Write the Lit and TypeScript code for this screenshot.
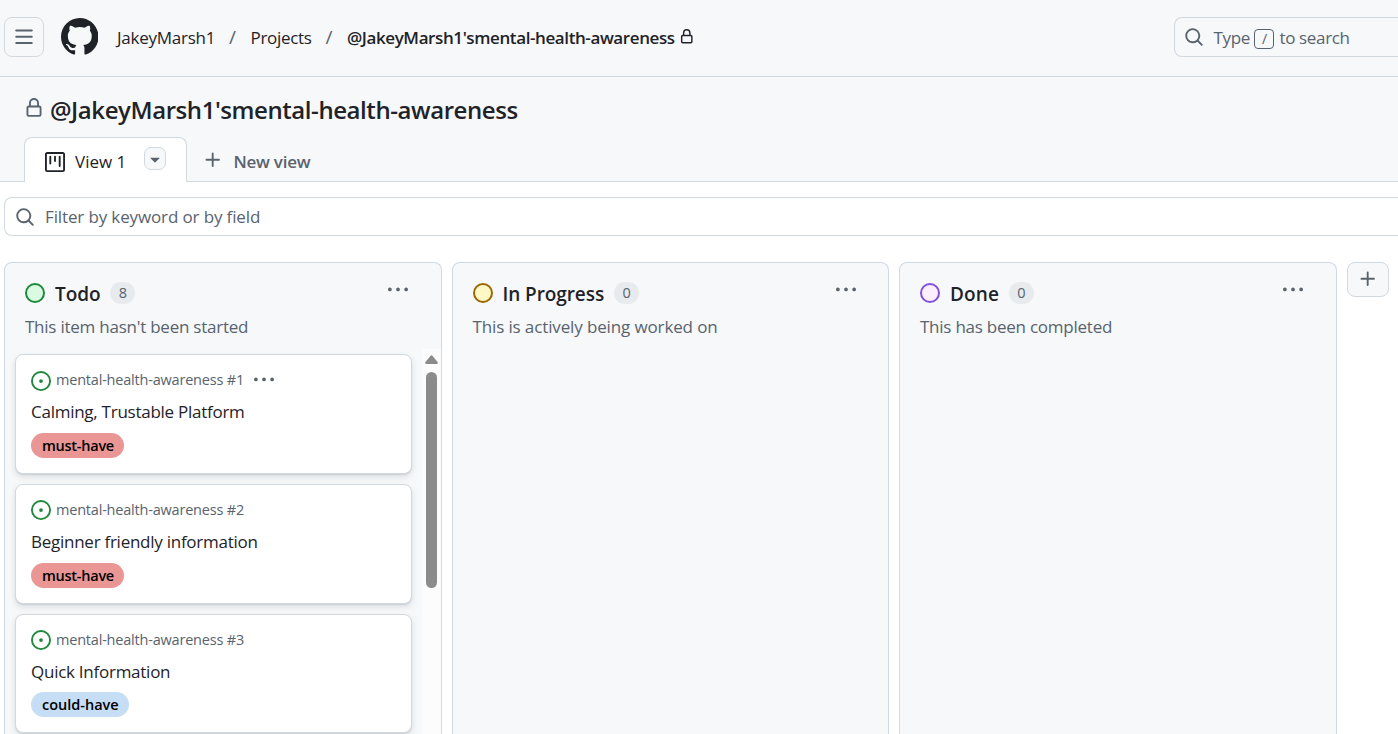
import { LitElement, html, css, svg } from "lit";
import { customElement, property } from "lit/decorators.js";

const ICONS: Record<string, string> = {
  menu: "M1 2.75A.75.75 0 0 1 1.75 2h12.5a.75.75 0 0 1 0 1.5H1.75A.75.75 0 0 1 1 2.75Zm0 5A.75.75 0 0 1 1.75 7h12.5a.75.75 0 0 1 0 1.5H1.75A.75.75 0 0 1 1 7.75ZM1.75 12h12.5a.75.75 0 0 1 0 1.5H1.75a.75.75 0 0 1 0-1.5Z",
  mark: "M8 0c4.42 0 8 3.58 8 8a8.013 8.013 0 0 1-5.45 7.59c-.4.08-.55-.17-.55-.38 0-.27.01-1.13.01-2.2 0-.75-.25-1.23-.54-1.48 1.78-.2 3.65-.88 3.65-3.95 0-.88-.31-1.59-.82-2.15.08-.2.36-1.02-.08-2.12 0 0-.67-.22-2.2.82-.64-.18-1.32-.27-2-.27-.68 0-1.36.09-2 .27-1.53-1.03-2.2-.82-2.2-.82-.44 1.1-.16 1.92-.08 2.12-.51.56-.82 1.28-.82 2.15 0 3.06 1.86 3.75 3.64 3.95-.23.2-.44.55-.51 1.07-.46.21-1.61.55-2.33-.66-.15-.24-.6-.83-1.23-.82-.67.01-.27.38.01.53.34.19.73.9.82 1.13.16.45.68 1.31 2.69.94 0 .67.01 1.3.01 1.49 0 .21-.15.45-.55.38A7.995 7.995 0 0 1 0 8c0-4.42 3.58-8 8-8Z",
  lock: "M4 4a4 4 0 0 1 8 0v2h.25c.966 0 1.75.784 1.75 1.75v5.5A1.75 1.75 0 0 1 12.25 15h-8.5A1.75 1.75 0 0 1 2 13.25v-5.5C2 6.784 2.784 6 3.75 6H4Zm8.25 3.5h-8.5a.25.25 0 0 0-.25.25v5.5c0 .138.112.25.25.25h8.5a.25.25 0 0 0 .25-.25v-5.5a.25.25 0 0 0-.25-.25ZM10.5 6V4a2.5 2.5 0 1 0-5 0v2Z",
  search: "M10.68 11.74a6 6 0 0 1-7.922-8.982 6 6 0 0 1 8.982 7.922l3.04 3.04a.749.749 0 0 1-.326 1.275.749.749 0 0 1-.734-.215ZM11.5 7a4.499 4.499 0 1 0-8.997 0A4.499 4.499 0 0 0 11.5 7Z",
  project: "M1.75 0h12.5C15.216 0 16 .784 16 1.75v12.5A1.75 1.75 0 0 1 14.25 16H1.75A1.75 1.75 0 0 1 0 14.25V1.75C0 .784.784 0 1.75 0ZM1.5 1.75v12.5c0 .138.112.25.25.25h12.5a.25.25 0 0 0 .25-.25V1.75a.25.25 0 0 0-.25-.25H1.75a.25.25 0 0 0-.25.25ZM11.75 3a.75.75 0 0 1 .75.75v7.5a.75.75 0 0 1-1.5 0v-7.5a.75.75 0 0 1 .75-.75Zm-8.25.75a.75.75 0 0 1 1.5 0v5.5a.75.75 0 0 1-1.5 0ZM8 3a.75.75 0 0 1 .75.75v3.5a.75.75 0 0 1-1.5 0v-3.5A.75.75 0 0 1 8 3Z",
  caret: "m4.427 7.427 3.396 3.396a.25.25 0 0 0 .354 0l3.396-3.396A.25.25 0 0 0 11.396 7H4.604a.25.25 0 0 0-.177.427Z",
  plus: "M7.75 2a.75.75 0 0 1 .75.75V7h4.25a.75.75 0 0 1 0 1.5H8.5v4.25a.75.75 0 0 1-1.5 0V8.5H2.75a.75.75 0 0 1 0-1.5H7V2.75A.75.75 0 0 1 7.75 2Z",
  dots: "M8 9a1.5 1.5 0 1 0 0-3 1.5 1.5 0 0 0 0 3ZM1.5 9a1.5 1.5 0 1 0 0-3 1.5 1.5 0 0 0 0 3Zm13 0a1.5 1.5 0 1 0 0-3 1.5 1.5 0 0 0 0 3Z",
  issue: "M8 9.5a1.5 1.5 0 1 0 0-3 1.5 1.5 0 0 0 0 3Z M8 0a8 8 0 1 1 0 16A8 8 0 0 1 8 0ZM1.5 8a6.5 6.5 0 1 0 13 0 6.5 6.5 0 0 0-13 0Z",
};

const icon = (name: string, size: number, cls = "") =>
  html`<svg class="icon ${cls}" width=${size} height=${size} viewBox="0 0 16 16" fill="currentColor">${svg`<path d=${ICONS[name]}></path>`}</svg>`;

interface Card { id: number; title: string; label: string; kind: string; menu?: boolean }
interface Column { name: string; tone: string; count: number; note: string; cards: Card[] }

const COLUMNS: Column[] = [
  {
    name: "Todo", tone: "green", count: 8, note: "This item hasn't been started",
    cards: [
      { id: 1, title: "Calming, Trustable Platform", label: "must-have", kind: "must", menu: true },
      { id: 2, title: "Beginner friendly information", label: "must-have", kind: "must" },
      { id: 3, title: "Quick Information", label: "could-have", kind: "could" },
    ],
  },
  { name: "In Progress", tone: "yellow", count: 0, note: "This is actively being worked on", cards: [] },
  { name: "Done", tone: "purple", count: 0, note: "This has been completed", cards: [] },
];

const base = css`
  * { box-sizing: border-box; }
  .icon { display: block; flex: none; }
  .t { white-space: nowrap; display: block; flex: none; }
`;

@customElement("board-column")
class BoardColumn extends LitElement {
  @property({ attribute: false }) column!: Column;

  static styles = [base, css`
    :host {
      display: flex; flex-direction: column; flex: none; box-sizing: border-box; width: 437.5px;
      border: 1px solid #d1d9e0; border-bottom: 0; border-radius: 8px 8px 0 0; background: #f6f8fa; overflow: hidden;
    }
    .head { display: flex; align-items: center; padding: 15px 32.5px 0 20px; height: 46px; }
    .dot { width: 20px; height: 20px; border-radius: 50%; border: 2px solid; flex: none; margin-top: -2px; }
    .dot.green { border-color: #1f883d; background: #dafbe1; }
    .dot.yellow { border-color: #9a6700; background: #fff8c5; }
    .dot.purple { border-color: #8250df; background: #fbefff; }
    .name { margin-left: 10px; font-size: 19px; font-weight: 600; line-height: 28px; letter-spacing: -0.08px; color: #1f2328; padding-top: 1px; }
    .name.purple { letter-spacing: 0.1px; }
    .count { margin-left: 10px; margin-top: -2px; min-width: 25px; height: 22px; border-radius: 11px; background: #e7ebee; color: #59636e; font-size: 14.5px; line-height: 21px; text-align: center; }
    .more { margin-left: auto; color: #59636e; margin-top: -7px; }
    .note { margin: 5px 0 0 20px; font-size: 17px; line-height: 26px; letter-spacing: -0.24px; color: #59636e; height: 35.3px; }
    .note.yellow { letter-spacing: -0.13px; }
    .scroll { display: flex; flex: 1; min-height: 0; }
    .list { flex: 1; display: flex; flex-direction: column; gap: 10px; padding: 5px 10px 0 10px; overflow: hidden; }
    .card { flex: none; height: 119.75px; background: #fff; border: 1px solid #d1d9e0; border-radius: 8px; padding: 14px 15px; box-shadow: 0 1px 1px rgba(37,41,46,.1), 0 3px 6px rgba(37,41,46,.12); }
    .card:last-child { height: 119px; }
    .meta { display: flex; align-items: center; height: 22px; color: #59636e; }
    .issue { color: #1f883d; margin-top: 0.7px; }
    .ref { margin-left: 5px; font-size: 14.5px; line-height: 22px; letter-spacing: -0.2px; }
    .cardmore { margin-left: 10px; }
    .title { margin-top: 8px; font-size: 17px; line-height: 26px; letter-spacing: -0.26px; color: #1f2328; }
    .label { width: max-content; margin-top: 7.6px; height: 25px; line-height: 25px; border-radius: 13px; padding: 0 10px 0 11px; font-size: 14.5px; font-weight: 600; color: #000; }
    .must { background: #e99695; letter-spacing: -0.25px; }
    .could { background: #c5def5; letter-spacing: 0; padding-right: 10.5px; line-height: 26px; }
    .bar { width: 19px; background: #fcfcfc; display: flex; flex-direction: column; align-items: center; padding-top: 6px; }
    .thumb { width: 11px; height: 216px; border-radius: 6px; background: #8b8b8b; margin-top: 8px; }
  `];

  render() {
    const c = this.column;
    return html`
      <div class="head">
        <span class="dot ${c.tone}"></span>
        <span class="t name ${c.tone}">${c.name}</span>
        <span class="count">${c.count}</span>
        <span class="more">${icon("dots", 20)}</span>
      </div>
      <span class="t note ${c.tone}">${c.note}</span>
      ${c.cards.length ? html`<div class="scroll">
        <div class="list">
          ${c.cards.map((k) => html`<div class="card">
            <div class="meta">
              ${icon("issue", 20, "issue")}
              <span class="t ref">mental-health-awareness #${k.id}</span>
              ${k.menu ? icon("dots", 20, "cardmore") : ""}
            </div>
            <span class="t title">${k.title}</span>
            <span class="label t ${k.kind}">${k.label}</span>
          </div>`)}
        </div>
        <div class="bar">
          <svg class="icon" width="13" height="9" viewBox="0 0 13 9" fill="#8b8b8b"><path d="M5.6.7Q6.5-.4 7.4.7L12.7 7.3Q13.2 9 11.8 9H1.2Q-.2 9 .3 7.3Z"></path></svg>
          <div class="thumb"></div>
        </div>
      </div>` : ""}
    `;
  }
}

@customElement("app-root")
class AppRoot extends LitElement {
  static styles = [base, css`
    :host { display: flex; flex-direction: column; width: 100%; height: 734px; overflow: hidden; background: #fff; font-family: "Open Sans", "Noto Sans", sans-serif; color: #1f2328; }
    .top { flex: none; height: 77px; display: flex; align-items: center; padding: 0 0 2px 4px; border-bottom: 1px solid #d1d9e0; background: #f6f8fa; font-size: 17px; }
    .menu { width: 40px; height: 40px; border: 1px solid #d1d9e0; border-radius: 8px; display: grid; place-items: center; color: #59636e; }
    .mark { margin-left: 16.5px; margin-top: -1px; }
    .crumb { margin-left: 19px; letter-spacing: -0.25px; }
    .sep { margin-left: 13.8px; width: 7.5px; font-size: 19px; color: #59636e; }
    .next { margin-left: 14px; letter-spacing: -0.3px; }
    .strong { font-weight: 600; letter-spacing: -0.4px; }
    .lock { margin-left: 4px; margin-top: -1px; }
    .find { margin-left: auto; width: 224px; height: 40px; border: 1px solid #d1d9e0; border-right: 0; border-radius: 8px 0 0 8px; display: flex; align-items: center; padding-left: 9px; color: #59636e; letter-spacing: -0.35px; flex: none; }
    .type { margin-left: 9.5px; }
    .key { width: 20px; height: 20px; border: 1px solid #59636e; border-radius: 4px; margin: 3px 5px 0 4.5px; font-size: 14px; line-height: 18px; text-align: center; }
    .project { flex: none; height: 105px; background: #f6f8fa; border-bottom: 1px solid #d1d9e0; display: flex; flex-direction: column; padding: 0 0 0 24px; }
    .heading { flex: none; display: flex; align-items: center; height: 60px; padding-top: 5px; }
    .hlock { color: #59636e; margin-top: -4px; }
    .h1 { margin-left: 6px; font-size: 24px; font-weight: 600; line-height: 36px; letter-spacing: -0.43px; }
    .tabs { display: flex; height: 45px; flex: none; }
    .tab { width: 163px; height: 45px; background: #fff; border: 1px solid #d1d9e0; border-bottom: 0; border-radius: 8px 8px 0 0; display: flex; align-items: center; padding: 3px 0 0 20px; font-size: 17px; }
    .view { margin-left: 10px; }
    .drop { width: 22px; height: 23px; border: 1px solid #d1d9e0; border-radius: 7px; background: #f6f8fa; color: #59636e; display: grid; place-items: center; margin: -6px 20px 0 auto; }
    .new { display: flex; align-items: center; color: #59636e; font-size: 17px; font-weight: 600; padding: 3px 0 0 16px; }
    .plus { margin-top: -3px; }
    .newt { margin-left: 10.5px; letter-spacing: -0.26px; }
    .filter { flex: none; margin: 15px 0 0 4px; height: 39px; border: 1px solid #d1d9e0; border-right: 0; border-radius: 8px 0 0 8px; display: flex; align-items: center; padding-left: 10px; color: #59636e; font-size: 17px; }
    .ft { margin-left: 10px; letter-spacing: -0.13px; }
    .board { flex: 1; min-height: 0; display: flex; gap: 10px; padding: 26px 0 0 4px; }
    .add { width: 42px; height: 35px; flex: none; border: 1px solid #d1d9e0; border-radius: 8px; background: #f6f8fa; color: #59636e; display: grid; place-items: center; padding-bottom: 1px; }
  `];

  render() {
    return html`
      <header class="top">
        <div class="menu">${icon("menu", 20)}</div>
        ${icon("mark", 37.5, "mark")}
        <span class="t crumb">JakeyMarsh1</span>
        <span class="t sep">/</span>
        <span class="t next">Projects</span>
        <span class="t sep">/</span>
        <span class="t next strong">@JakeyMarsh1'smental-health-awareness</span>
        ${icon("lock", 15.5, "lock")}
        <div class="find">${icon("search", 20)}<span class="t type">Type</span><span class="key">/</span><span class="t">to search</span></div>
      </header>
      <section class="project">
        <div class="heading">${icon("lock", 20, "hlock")}<span class="t h1">@JakeyMarsh1'smental-health-awareness</span></div>
        <nav class="tabs">
          <div class="tab">${icon("project", 20)}<span class="t view">View 1</span><span class="drop">${icon("caret", 20)}</span></div>
          <div class="new">${icon("plus", 20, "plus")}<span class="t newt">New view</span></div>
        </nav>
      </section>
      <div class="filter">${icon("search", 20)}<span class="t ft">Filter by keyword or by field</span></div>
      <main class="board">
        ${COLUMNS.map((c) => html`<board-column .column=${c}></board-column>`)}
        <div class="add">${icon("plus", 20)}</div>
      </main>
    `;
  }
}
